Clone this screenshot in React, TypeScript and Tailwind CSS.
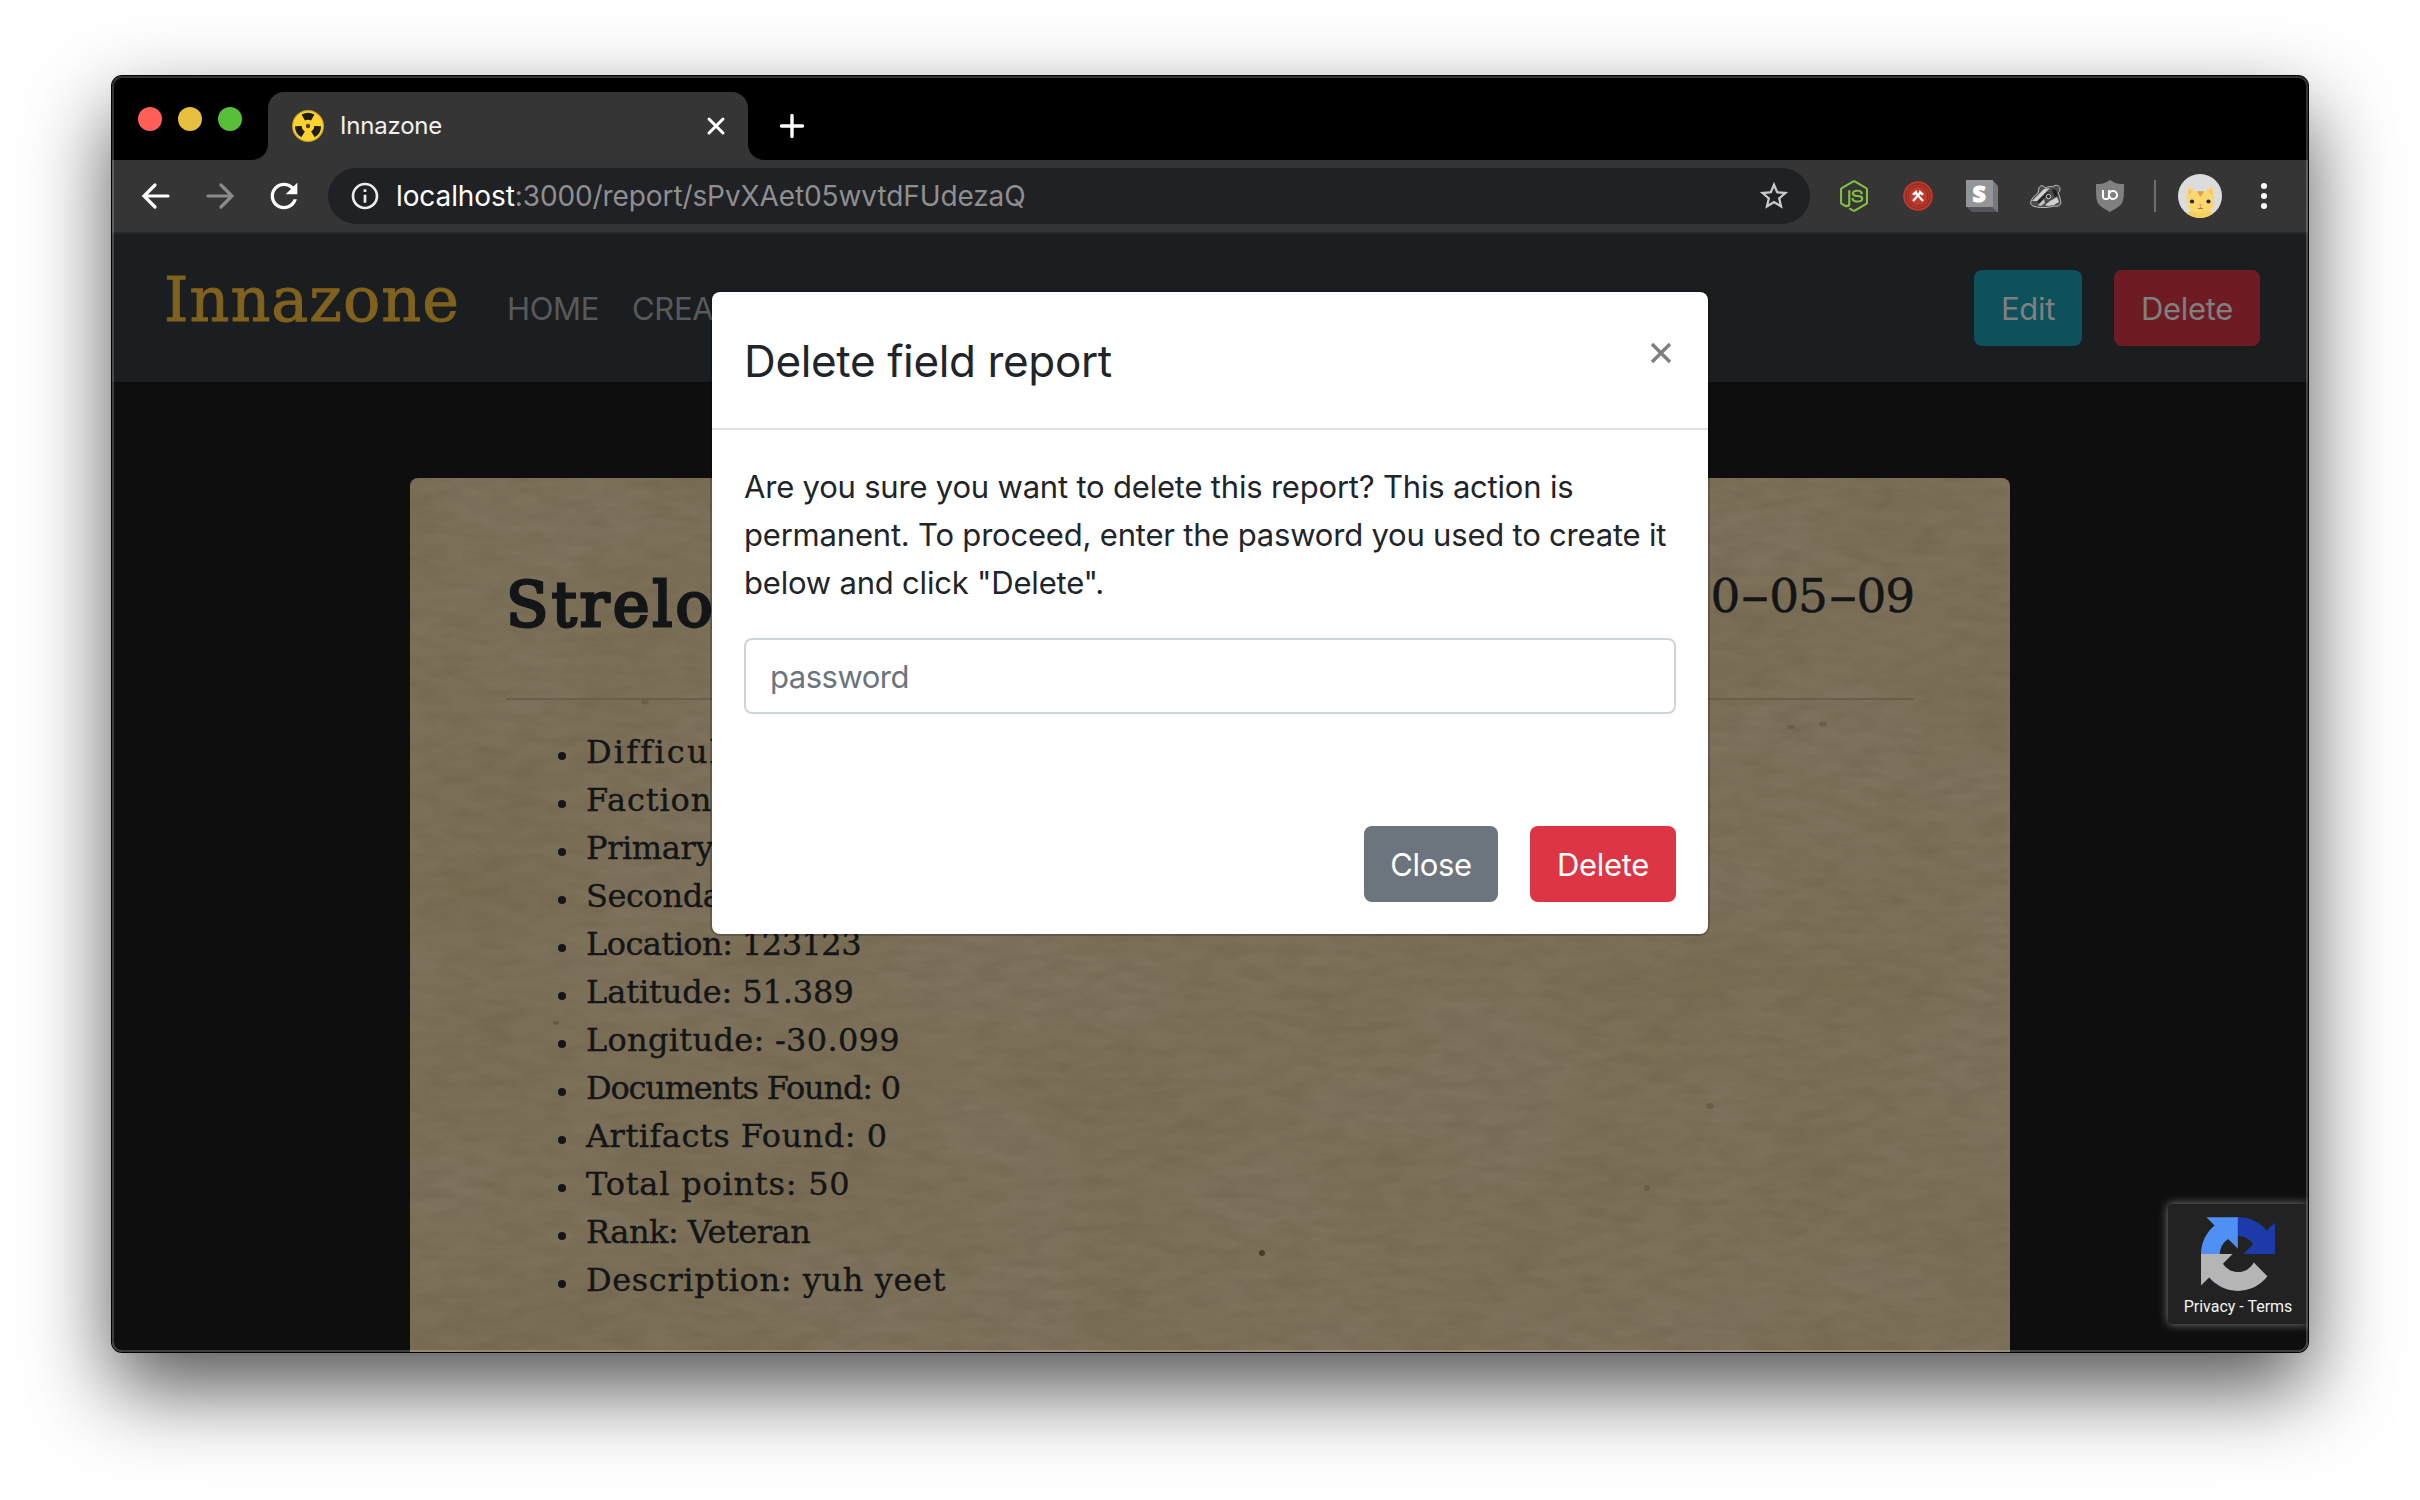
import type { ReactNode } from "react";
import { FaNodeJs } from "react-icons/fa";
import { SiUblockorigin } from "react-icons/si";

const slab = "font-['DejaVu_Serif',serif]";

const report = [
  { text: "Difficulty", spacing: "tracking-[2.2px] [font-variant-ligatures:none]" },
  { text: "Faction:", spacing: "tracking-[0.9px]" },
  { text: "Primary", spacing: "tracking-[-0.4px]" },
  { text: "Secondary", spacing: "tracking-[-0.4px]" },
  { text: "Location: 123123", spacing: "tracking-[-0.54px]" },
  { text: "Latitude: 51.389", spacing: "tracking-[-0.1px]" },
  { text: "Longitude: -30.099", spacing: "tracking-[0.3px]" },
  { text: "Documents Found: 0", spacing: "tracking-[-1.2px]" },
  { text: "Artifacts Found: 0", spacing: "tracking-[0.5px]" },
  { text: "Total points: 50", spacing: "tracking-[0.78px]" },
  { text: "Rank: Veteran", spacing: "tracking-[-0.5px]" },
  { text: "Description: yuh yeet", spacing: "tracking-[0.61px]" },
];

function Favicon() {
  const blade = "M12.9 10.6 L9.6 4.6 A13 13 0 0 1 22.4 4.6 L19.1 10.6 A6.2 6.2 0 0 0 12.9 10.6 Z";
  return (
    <svg viewBox="0 0 32 32" className="size-8">
      <circle cx="16" cy="16" r="16" fill="#c9a52b" />
      <circle cx="16" cy="16" r="14.8" fill="#ffd32f" />
      {[0, 120, 240].map((a) => (
        <path key={a} d={blade} fill="#1d1d18" transform={`rotate(${a} 16 16)`} />
      ))}
      <circle cx="16" cy="16" r="2.2" fill="#4a4020" />
    </svg>
  );
}

function TitleBar() {
  return (
    <div className="flex h-[84px] items-end bg-black">
      <div className="flex h-full items-center gap-4 pt-0.5 pl-[26px]">
        <span className="size-6 rounded-full bg-[#ff5f57]" />
        <span className="size-6 rounded-full bg-[#e6bf3f]" />
        <span className="size-6 rounded-full bg-[#57c038]" />
      </div>
      <svg viewBox="0 0 16 16" className="ml-[10px] size-4">
        <path d="M16 0A16 16 0 0 1 0 16H16Z" fill="#353535" />
      </svg>
      <div className="flex h-[68px] w-[480px] items-center rounded-t-2xl bg-[#353535] pr-[22px] pl-6">
        <Favicon />
        <span className="ml-4 flex-1 text-[24px] tracking-[-0.2px] text-[#f1f1f1]">Innazone</span>
        <svg viewBox="0 0 20 20" className="size-5" stroke="#fff" strokeWidth="3" strokeLinecap="round">
          <path d="M3 3l14 14M17 3L3 17" />
        </svg>
      </div>
      <svg viewBox="0 0 16 16" className="size-4">
        <path d="M0 0A16 16 0 0 0 16 16H0Z" fill="#353535" />
      </svg>
      <svg viewBox="0 0 26 26" className="mb-[21px] ml-[15px] size-[26px]" stroke="#fff" strokeWidth="3.4" strokeLinecap="round">
        <path d="M13 2.5v21M2.5 13h21" />
      </svg>
    </div>
  );
}

function Badger() {
  return (
    <svg viewBox="0 0 32 24" className="h-6 w-8">
      <path d="M.7 18C2 14 4 12 8 9L9 4C10 1 14 1 15 4C18 2.500 21 2 23 3C25 0 30 1 30 5C30 7 29 8 28 9C30 12 30 15 31 19C30 22 27 23 24 22C18 24 8 24 3 22C1 21 .7 20 .7 18Z" fill="#4c4c4c" stroke="#bdbdbd" strokeWidth="1" />
      <path d="M2 17L9 10L14 5L20 4L15 9L7 17Z" fill="#d0d0d0" />
      <path d="M7 18L13 12L17 8L20 9L14 14L10 20Z" fill="#232323" />
      <path d="M8 21L14 15L15 19L11 22Z" fill="#c4c4c4" />
      <path d="M22 5L26 6L28 12L25 13L23 9Z" fill="#1f1f1f" />
      <path d="M15 21L20 17L27 13L29 18L24 21L18 22Z" fill="#cfcfcf" />
      <circle cx="18.500" cy="12.500" r="2.200" fill="#262626" stroke="#cfcfcf" strokeWidth="1" />
    </svg>
  );
}

function CatAvatar() {
  return (
    <svg viewBox="0 0 44 44" className="ml-[22px] size-11">
      <clipPath id="avatar">
        <circle cx="22" cy="22" r="22" />
      </clipPath>
      <g clipPath="url(#avatar)">
        <rect width="44" height="44" fill="#dcdcdc" />
        <path d="M4 46C6 38 14 36 22 36C31 36 37 38 39 46Z" fill="#f7cf5c" />
        <path d="M9 26C8 20 9 15 11 12.500C13 13 15 15 17 17.500C20 16.800 25 16.800 28 17.500C30 15 32 13 34 12.500C36 16 36 21 36 27C37 34 32 39 22.500 39C13 39 8 34 9 26Z" fill="#fbd86f" />
        <path d="M11.500 15L14 18L10.800 20.500ZM33.500 15L31 18L34.300 20.500Z" fill="#f3b48a" />
        <path d="M19 17.500C21 17 24 17 26 17.500L22.500 23Z" fill="#dca24a" />
        <circle cx="14" cy="27.500" r="2.100" fill="#1c2b3a" />
        <circle cx="30.500" cy="27.500" r="2.100" fill="#1c2b3a" />
        <path d="M21 30.500H24L22.500 32.500Z" fill="#ee8277" />
        <path d="M22.500 33V34.500M20 34.500H25" stroke="#a87a34" strokeWidth="1" />
      </g>
    </svg>
  );
}

function Slot({ children }: { children: ReactNode }) {
  return <span className="flex size-8 items-center justify-center">{children}</span>;
}

function Toolbar() {
  return (
    <div className="flex h-[74px] items-center border-b-2 border-[#262728] bg-[#353535] pl-6">
      <div className="flex items-center gap-6">
        <svg viewBox="0 0 40 40" className="size-10" fill="none" stroke="#fff" strokeWidth="3.2">
          <path d="M19 9L8 20L19 31M8 20H32" strokeLinecap="round" />
        </svg>
        <svg viewBox="0 0 40 40" className="size-10" fill="none" stroke="#8b8b8b" strokeWidth="3.2">
          <path d="M21 9L32 20L21 31M32 20H8" strokeLinecap="round" />
        </svg>
        <svg viewBox="0 0 24 24" className="size-10" fill="#fff">
          <path d="M17.650 6.350C16.200 4.900 14.210 4 12 4c-4.420 0-7.990 3.580-7.990 8s3.570 8 7.990 8c3.730 0 6.840-2.550 7.730-6h-2.080c-.82 2.330-3.040 4-5.650 4-3.310 0-6-2.690-6-6s2.690-6 6-6c1.660 0 3.140.69 4.220 1.780L13 11h7V4l-2.350 2.350z" />
        </svg>
      </div>
      <div className="ml-6 flex h-14 w-[1482px] items-center rounded-full bg-[#202124] pr-[19px] pl-[21px]">
        <svg viewBox="0 0 24 24" className="size-8" fill="#ececec">
          <path d="M11 7h2v2h-2zm0 4h2v6h-2zm1-9C6.480 2 2 6.480 2 12s4.480 10 10 10 10-4.480 10-10S17.520 2 12 2zm0 18c-4.410 0-8-3.590-8-8s3.590-8 8-8 8 3.590 8 8-3.590 8-8 8z" />
        </svg>
        <span className="ml-[15px] flex-1 text-[28px] tracking-[-0.1px] text-[#8e8f91]">
          <span className="text-white">localhost</span>:3000/report/sPvXAet05wvtdFUdezaQ
        </span>
        <svg viewBox="0 0 24 24" className="size-[34px]" fill="#c9c9c9">
          <path d="M22 9.240l-7.190-.62L12 2 9.190 8.630 2 9.240l5.460 4.730L5.820 21 12 17.270 18.180 21l-1.630-7.030L22 9.240zM12 15.400l-3.760 2.270 1-4.280-3.320-2.880 4.380-.38L12 6.100l1.710 4.040 4.380.38-3.320 2.880 1 4.280L12 15.400z" />
        </svg>
      </div>
      <div className="ml-7 flex items-center gap-8">
        <Slot>
          <FaNodeJs className="size-8 text-[#83c141]" />
        </Slot>
        <Slot>
          <svg viewBox="0 0 30 30" className="size-[30px]">
            <circle cx="15" cy="15" r="14.800" fill="#c0392b" />
            <circle cx="15" cy="15" r="12.200" fill="none" stroke="#832d25" strokeWidth="1.200" />
            <circle cx="15" cy="15" r="9.800" fill="none" stroke="#8f2f26" strokeWidth="1.200" />
            <path d="M12 11L20 20M18 11L10 20" stroke="#fff" strokeWidth="2.200" />
            <path d="M9 13L13.500 9L14.500 12L11 14.500ZM21 13L16.500 9L15.500 12L19 14.500Z" fill="#fff" />
          </svg>
        </Slot>
        <Slot>
          <span className="flex size-8 bg-[linear-gradient(45deg,#54565b_50%,#77797f_50%)] [clip-path:polygon(0_0,83%_0,100%_19%,100%_100%,19%_100%,0_83%)]">
            <span className="flex size-[26.5px] items-center justify-center bg-[#939599] font-['Open_Sans',sans-serif] text-[23px] leading-none font-extrabold text-white [-webkit-text-stroke:1px_white]">
              S
            </span>
          </span>
        </Slot>
        <Slot>
          <Badger />
        </Slot>
        <Slot>
          <span className="flex size-8 items-center justify-center bg-[linear-gradient(#fff,#fff)] bg-[length:18px_14px] bg-center bg-no-repeat">
            <SiUblockorigin className="size-8 text-[#808080]" />
          </span>
        </Slot>
      </div>
      <span className="ml-7 h-8 w-0.5 bg-[#6f6f6f]" />
      <CatAvatar />
      <div className="ml-[39px] flex flex-col gap-1">
        <span className="size-1.5 rounded-full bg-white" />
        <span className="size-1.5 rounded-full bg-white" />
        <span className="size-1.5 rounded-full bg-white" />
      </div>
    </div>
  );
}

function Button({ className, children }: { className: string; children: ReactNode }) {
  return (
    <button className={`flex h-[76px] items-center justify-center rounded-lg pt-0.5 text-[31px] tracking-[-0.35px] ${className}`}>
      {children}
    </button>
  );
}

function NavBar() {
  return (
    <nav className="flex h-[148px] items-center bg-[#1a1e21] pr-12 pl-[52px] text-[31px] tracking-[-0.35px] text-[#58595b]">
      <span className={`${slab} w-[343px] pb-4 text-[62px] leading-none tracking-[1px] text-[#80611d] [-webkit-text-stroke:1px_#80611d]`}>
        Innazone
      </span>
      <span className="pt-0.5">HOME</span>
      <span className="ml-[33px] flex-1 pt-0.5">CREATE</span>
      <div className="flex gap-8">
        <Button className="w-[108px] bg-[#0d515c] text-[#808080]">Edit</Button>
        <Button className="w-[146px] bg-[#6e1b24] text-[#808080]">Delete</Button>
      </div>
    </nav>
  );
}

function PaperTexture() {
  return (
    <svg className="absolute inset-0 size-full">
      <filter id="fibres" x="0" y="0" width="100%" height="100%" colorInterpolationFilters="sRGB">
        <feTurbulence type="fractalNoise" baseFrequency="0.03 0.09" numOctaves="3" seed="7" />
        <feColorMatrix values="0 0 0 0 0.36  0 0 0 0 0.3  0 0 0 0 0.21  0.9 0 0 0 -0.3" />
      </filter>
      <filter id="stains" x="0" y="0" width="100%" height="100%" colorInterpolationFilters="sRGB">
        <feTurbulence type="fractalNoise" baseFrequency="0.006 0.009" numOctaves="2" seed="3" />
        <feColorMatrix values="0 0 0 0 0.44  0 0 0 0 0.38  0 0 0 0 0.26  0 1 0 0 -0.38" />
      </filter>
      <rect width="100%" height="100%" filter="url(#stains)" opacity=".6" />
      <rect width="100%" height="100%" filter="url(#fibres)" opacity=".42" />
      <g fill="#4a3c28">
        <circle cx="852" cy="775" r="3" />
        <ellipse cx="235" cy="224" rx="4" ry="2.500" opacity=".3" />
        <ellipse cx="1413" cy="246" rx="4" ry="2.500" opacity=".3" />
        <ellipse cx="1381" cy="249" rx="4" ry="2" opacity=".25" />
        <ellipse cx="1300" cy="628" rx="4" ry="3" opacity=".3" />
        <ellipse cx="1237" cy="710" rx="3" ry="3" opacity=".25" />
        <ellipse cx="146" cy="545" rx="3" ry="2" opacity=".35" />
      </g>
    </svg>
  );
}

function Dash() {
  return <span className="inline-block w-[30px] scale-x-[1.9] text-center">-</span>;
}

function ReportCard() {
  return (
    <section className={`${slab} relative mx-auto mt-24 h-[874px] w-[1600px] overflow-hidden rounded-t-lg bg-[#7e725c] text-[#131517]`}>
      <PaperTexture />
      <div className="relative px-24 pt-24">
        <div className="flex h-[60px] justify-between">
          <h1 className="text-[62px] leading-[61px] tracking-[3.2px] [-webkit-text-stroke:3px_#131517]">Strelok</h1>
          <p className="text-[47px] leading-[43px] tracking-[-1.2px] whitespace-nowrap [-webkit-text-stroke:0.5px_#131517]">
            2020
            <Dash />
            05
            <Dash />
            09
          </p>
        </div>
        <hr className="mt-16 border-t-2 border-[#6b5e4a]" />
        <ul className="mt-7 pl-[52px] text-[32px] leading-[48px] [-webkit-text-stroke:0.4px_#131517]">
          {report.map((row) => (
            <li key={row.text} className="flex items-center">
              <span className="mt-2 mr-5 size-2 rounded-full bg-[#131517]" />
              <span className={row.spacing}>{row.text}</span>
            </li>
          ))}
        </ul>
      </div>
    </section>
  );
}

function DeleteDialog() {
  return (
    <div role="dialog" className="absolute top-[216px] left-[600px] flex h-[642px] w-[996px] flex-col rounded-lg bg-white text-[#212529] ring-2 ring-black/20">
      <div className="flex h-[138px] items-center justify-between border-b-2 border-[#dee2e6] px-8">
        <h2 className="pt-0.5 text-[44px] leading-none tracking-[-0.36px]">Delete field report</h2>
        <svg viewBox="0 0 22 22" className="mr-[4px] mb-[15px] size-[22px]" stroke="#7f7f7f" strokeWidth="3.400">
          <path d="M2 2l18 18M20 2L2 20" />
        </svg>
      </div>
      <div className="px-8 pt-[33px]">
        <p className="text-[31px] leading-[48px] tracking-[-0.2px] whitespace-nowrap">
          Are you sure you want to delete this report? This action is
          <br />
          permanent. To proceed, enter the pasword you used to create it
          <br />
          below and click "Delete".
        </p>
        <input
          type="password"
          placeholder="password"
          className="mt-[31px] block h-[76px] w-full rounded-lg border-2 border-[#ced4da] px-6 text-[31px] tracking-[-0.5px] placeholder:text-[#6c757d]"
        />
      </div>
      <div className="mt-28 flex justify-end gap-8 px-8 text-white">
        <Button className="w-[134px] bg-[#6c757d]">Close</Button>
        <Button className="w-[146px] bg-[#dc3545]">Delete</Button>
      </div>
    </div>
  );
}

function CaptchaBadge() {
  return (
    <div className="absolute right-0 bottom-[28px] flex h-[120px] w-[140px] flex-col items-center rounded-l-[4px] bg-[#222] pt-[13px] shadow-[0_0_10px_#808080]">
      <svg viewBox="0 0 64 64" className="size-[74px]">
        <path fill="#1c3aa9" d="M64 31.955l-.033-1.370V4.687l-7.160 7.160C50.948 4.674 42.033.093 32.050.093c-10.389 0-19.622 4.960-25.458 12.640l11.736 11.860a15.550 15.550 0 0 1 4.754-5.334c2.050-1.600 4.952-2.906 8.968-2.906.485 0 .86.057 1.135.163 4.976.393 9.288 3.140 11.828 7.124l-8.307 8.307L64 31.953" />
        <path fill="#4f90f5" d="M31.862.094l-1.370.033H4.594l7.160 7.160C4.580 13.147 0 22.060 0 32.046c0 10.388 4.960 19.622 12.640 25.458L24.500 45.768a15.550 15.550 0 0 1-5.334-4.754c-1.600-2.050-2.906-4.952-2.906-8.968 0-.485.057-.86.163-1.135.393-4.976 3.140-9.288 7.124-11.828l8.307 8.307L31.860.095" />
        <path fill="#b5b5b5" d="M.001 32.045l.033 1.370v25.898l7.160-7.160c5.860 7.173 14.774 11.754 24.760 11.754 10.388 0 19.622-4.960 25.458-12.640l-11.736-11.860a15.550 15.550 0 0 1-4.754 5.334c-2.050 1.600-4.952 2.906-8.968 2.906-.485 0-.86-.057-1.135-.163-4.976-.393-9.288-3.140-11.828-7.124l8.307-8.307c-10.522.040-22.400.066-27.295-.005" />
      </svg>
      <span className="mt-[6px] font-[Roboto,sans-serif] text-[16px] leading-[20px] text-[#f4f4f4]">Privacy - Terms</span>
    </div>
  );
}

export default function App() {
  return (
    <div className="h-[1500px] w-[2420px] overflow-hidden bg-white px-[112px] pt-[76px] font-[Inter,sans-serif]">
      <div className="h-[1276px] w-[2196px] rounded-[10px] shadow-[0_0_0_1px_#000,0_36px_84px_rgba(0,0,0,0.68)]">
        <div className="relative size-full overflow-hidden rounded-[10px] bg-[#0e0e0e]">
          <TitleBar />
          <Toolbar />
          <NavBar />
          <ReportCard />
          <CaptchaBadge />
          <DeleteDialog />
          <div className="pointer-events-none absolute inset-0 rounded-[10px] border-2 border-white/20" />
        </div>
      </div>
    </div>
  );
}
